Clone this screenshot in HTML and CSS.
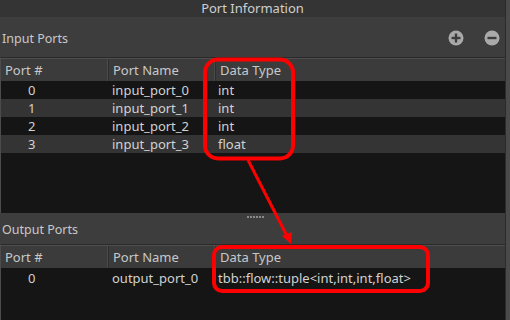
FILE: index.html
```html
<!DOCTYPE html>
<html lang="en">
<head>
  <meta charset="UTF-8">
  <title>Port Information</title>
  <link rel="stylesheet" href="styles.css">
</head>
<body>
  <div class="window">
    <div class="panel">
      <div class="title-bar">Port Information</div>

      <!-- Input ports -->
      <div class="section-head input-head">
        <span class="section-label">Input Ports</span>
        <div class="tools">
          <svg class="tool" viewBox="0 0 16 16" width="16" height="16">
            <circle cx="8" cy="8" r="7.5" fill="#a9a9a9"/>
            <rect x="3.5" y="6.8" width="9" height="2.4" fill="#3c3c3c"/>
            <rect x="6.8" y="3.5" width="2.4" height="9" fill="#3c3c3c"/>
          </svg>
          <svg class="tool" viewBox="0 0 16 16" width="16" height="16">
            <circle cx="8" cy="8" r="7.5" fill="#a9a9a9"/>
            <rect x="3.5" y="6.8" width="9" height="2.4" fill="#3c3c3c"/>
          </svg>
        </div>
      </div>
      <div class="port-table input-table">
        <div class="row header">
          <div class="cell c-num">Port #</div>
          <div class="cell c-name">Port Name</div>
          <div class="cell c-type">Data Type</div>
        </div>
        <div class="row">
          <div class="cell c-num num">0</div>
          <div class="cell c-name">input_port_0</div>
          <div class="cell c-type">int</div>
        </div>
        <div class="row alt">
          <div class="cell c-num num">1</div>
          <div class="cell c-name">input_port_1</div>
          <div class="cell c-type">int</div>
        </div>
        <div class="row">
          <div class="cell c-num num">2</div>
          <div class="cell c-name">input_port_2</div>
          <div class="cell c-type">int</div>
        </div>
        <div class="row alt">
          <div class="cell c-num num">3</div>
          <div class="cell c-name">input_port_3</div>
          <div class="cell c-type">float</div>
        </div>
      </div>

      <!-- Output ports -->
      <div class="section-head output-head">
        <div class="grip"><i></i><i></i><i></i><i></i><i></i><i></i></div>
        <span class="section-label">Output Ports</span>
      </div>
      <div class="port-table output-table">
        <div class="row header">
          <div class="cell c-num">Port #</div>
          <div class="cell c-name">Port Name</div>
          <div class="cell c-type">Data Type</div>
        </div>
        <div class="row">
          <div class="cell c-num num">0</div>
          <div class="cell c-name">output_port_0</div>
          <div class="cell c-type">tbb::flow::tuple&lt;int,int,int,float&gt;</div>
        </div>
      </div>
    </div>
    <div class="edge"></div>

    <!-- red callouts -->
    <svg class="callout" width="510" height="320" viewBox="0 0 510 320">
      <rect x="205" y="59.5" width="88" height="99" rx="13" fill="none" stroke="#ff0000" stroke-width="4"/>
      <line x1="248" y1="160" x2="287" y2="236" stroke="#ff0000" stroke-width="3"/>
      <polygon points="291,244 282,236 292,232" fill="#ff0000"/>
      <rect x="214" y="247" width="214" height="44" rx="8" fill="none" stroke="#ff0000" stroke-width="4"/>
    </svg>
  </div>
</body>
</html>
```

FILE: styles.css
```css
body {
  margin: 0;
  background: #3d3d3d;
  font-family: "Noto Sans", "Open Sans", sans-serif;
  font-size: 13px;
  color: #d2d2d2;
}
.window {
  position: relative;
  width: 510px;
  height: 320px;
  display: flex;
  overflow: hidden;
}
.panel {
  width: 505px;
  display: flex;
  flex-direction: column;
  background: #3d3d3d;
}
.edge {
  flex: 1;
  border-left: 1px solid #2b2b2b;
  background: #4a4a4a;
}
.title-bar {
  height: 17px;
  line-height: 17px;
  text-align: center;
  background: #343434;
  font-size: 13px;
  color: #cfcfcf;
}
/* section headers */
.section-head {
  display: flex;
  align-items: center;
}
.input-head {
  height: 40px;
  padding: 3px 2px 0 2px;
  box-sizing: border-box;
  justify-content: space-between;
}
.section-label {
  font-size: 12.5px;
  color: #c9c9c9;
}
.tools {
  display: flex;
  gap: 20px;
  margin-right: 3px;
  margin-top: -1px;
}
.tool {
  display: block;
}
.output-head {
  position: relative;
  height: 31px;
  padding: 0 2px;
  align-items: flex-end;
  padding-bottom: 6px;
  box-sizing: border-box;
}
.grip {
  position: absolute;
  top: 3px;
  left: 247px;
  display: flex;
  gap: 1px;
}
.grip i {
  width: 2px;
  height: 2px;
  background: #8a8a8a;
}
/* tables */
.port-table {
  background: #151515;
  border-left: 1px solid #4c4c4c;
  border-top: 1px solid #2a2a2a;
}
.input-table {
  height: 155px;
}
.output-table {
  flex: 1;
}
.row {
  display: flex;
  height: 18px;
  line-height: 18px;
}
.row.alt {
  background: #343434;
}
.row.header {
  height: 22px;
  line-height: 22px;
  background: #3b3b3b;
  border-top: 1px solid #4e4e4e;
  color: #c8c8c8;
}
.cell {
  padding-left: 4px;
  white-space: nowrap;
}
.header .cell {
  border-right: 1px solid #2e2e2e;
  box-shadow: inset -1px 0 0 #4a4a4a;
}
.c-num {
  width: 103px;
}
.c-name {
  width: 102px;
}
.c-type {
  flex: 1;
}
.header .c-type {
  border-right: none;
  box-shadow: none;
}
.num {
  padding-left: 27px;
  width: 80px;
}
.output-table .row:not(.header) {
  height: 20px;
  line-height: 20px;
}
.callout {
  position: absolute;
  left: 0;
  top: 0;
  pointer-events: none;
}
```
